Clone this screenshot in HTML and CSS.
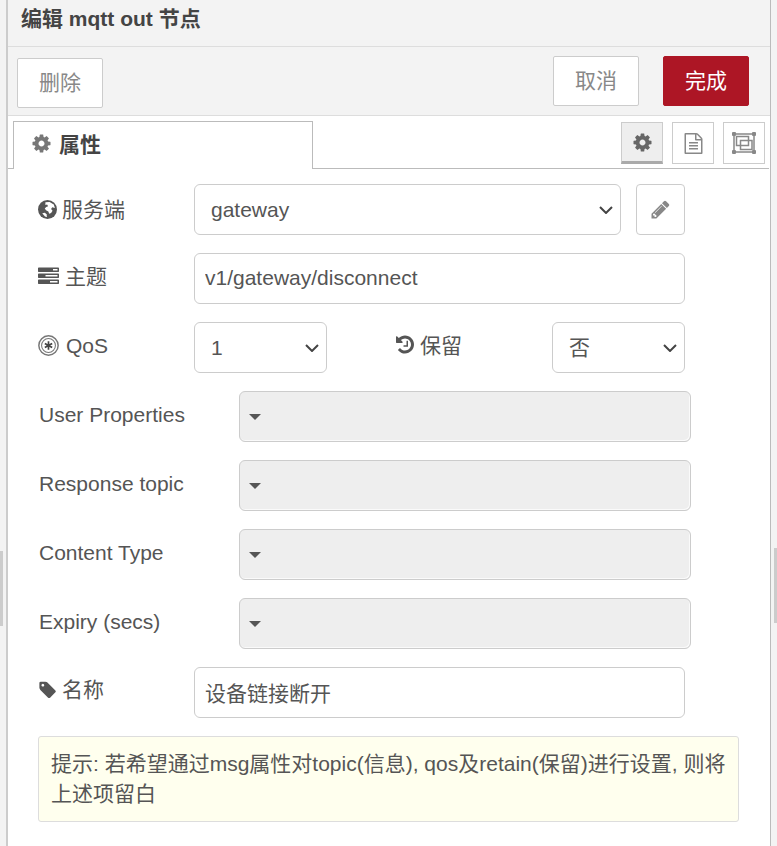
FILE: index.html
```html
<!DOCTYPE html>
<html lang="zh-CN">
<head>
    <meta charset="UTF-8">
    <meta name="viewport" content="width=device-width, initial-scale=1.0">
    <title>编辑 mqtt out 节点</title>
    <link rel="stylesheet" href="styles.css">
</head>
<body>
    <div class="page">
        <div class="gutter gutter-left"><div class="grip"></div></div>
        <div class="tray">
            <div class="tray-title">编辑 mqtt out 节点</div>

            <div class="toolbar">
                <button class="btn btn-delete">删除</button>
                <div class="toolbar-right">
                    <button class="btn">取消</button>
                    <button class="btn btn-primary">完成</button>
                </div>
            </div>

            <div class="tabs">
                <div class="tab">
                    <svg class="icon icon-tab" viewBox="0 0 1792 1792"><path d="M1152 896q0-106-75-181t-181-75-181 75-75 181 75 181 181 75 181-75 75-181zm512-109v222q0 12-8 23t-20 13l-185 28q-19 54-39 91 35 50 107 138 10 12 10 25t-9 23q-27 37-99 108t-94 71q-12 0-26-9l-138-108q-44 23-91 38-16 136-29 186-7 28-36 28h-222q-14 0-24.5-8.5t-11.5-21.5l-28-184q-49-16-90-37l-141 107q-10 9-25 9-14 0-25-11-126-114-165-168-7-10-7-23 0-12 8-23 15-21 51-66.5t54-70.5q-27-50-41-99l-183-27q-13-2-21-12.5t-8-23.5v-222q0-12 8-23t19-13l186-28q14-46 39-92-40-57-107-138-10-12-10-24 0-10 9-23 26-36 98.5-107.5t94.5-71.5q13 0 26 10l138 107q44-23 91-38 16-136 29-186 7-28 36-28h222q14 0 24.5 8.5t11.5 21.5l28 184q49 16 90 37l142-107q9-9 24-9 13 0 25 10 129 119 165 170 7 8 7 22 0 12-8 23-15 21-51 66.5t-54 70.5q26 50 41 98l183 28q13 2 21 12.5t8 23.5z"/></svg>
                    <span>属性</span>
                </div>
                <div class="tab-buttons">
                    <div class="tab-btn tab-btn-active">
                        <svg class="icon icon-gear" viewBox="0 0 1792 1792"><path d="M1152 896q0-106-75-181t-181-75-181 75-75 181 75 181 181 75 181-75 75-181zm512-109v222q0 12-8 23t-20 13l-185 28q-19 54-39 91 35 50 107 138 10 12 10 25t-9 23q-27 37-99 108t-94 71q-12 0-26-9l-138-108q-44 23-91 38-16 136-29 186-7 28-36 28h-222q-14 0-24.5-8.5t-11.5-21.5l-28-184q-49-16-90-37l-141 107q-10 9-25 9-14 0-25-11-126-114-165-168-7-10-7-23 0-12 8-23 15-21 51-66.5t54-70.5q-27-50-41-99l-183-27q-13-2-21-12.5t-8-23.5v-222q0-12 8-23t19-13l186-28q14-46 39-92-40-57-107-138-10-12-10-24 0-10 9-23 26-36 98.5-107.5t94.5-71.5q13 0 26 10l138 107q44-23 91-38 16-136 29-186 7-28 36-28h222q14 0 24.5 8.5t11.5 21.5l28 184q49 16 90 37l142-107q9-9 24-9 13 0 25 10 129 119 165 170 7 8 7 22 0 12-8 23-15 21-51 66.5t-54 70.5q26 50 41 98l183 28q13 2 21 12.5t8 23.5z"/></svg>
                    </div>
                    <div class="tab-btn">
                        <svg class="icon icon-muted" viewBox="0 0 1792 1792"><path d="M1596 380q28 28 48 76t20 88v1152q0 40-28 68t-68 28h-1344q-40 0-68-28t-28-68v-1600q0-40 28-68t68-28h896q40 0 88 20t76 48zm-444-244v376h376q-10-29-22-41l-313-313q-12-12-41-22zm384 1528v-1024h-416q-40 0-68-28t-28-68v-416h-768v1536h1280zm-1024-864q0-14 9-23t23-9h704q14 0 23 9t9 23v64q0 14-9 23t-23 9h-704q-14 0-23-9t-9-23v-64zm736 224q14 0 23 9t9 23v64q0 14-9 23t-23 9h-704q-14 0-23-9t-9-23v-64q0-14 9-23t23-9h704zm0 256q14 0 23 9t9 23v64q0 14-9 23t-23 9h-704q-14 0-23-9t-9-23v-64q0-14 9-23t23-9h704z"/></svg>
                    </div>
                    <div class="tab-btn">
                        <svg class="icon-frame" viewBox="0 0 24 22">
                            <rect x="2" y="2" width="20" height="18" fill="none" stroke="#888" stroke-width="1.5"/>
                            <rect x="4.5" y="4.5" width="12" height="9" fill="none" stroke="#888" stroke-width="1.5"/>
                            <rect x="8.5" y="8.5" width="11.5" height="9" fill="none" stroke="#888" stroke-width="1.5"/>
                            <rect x="0" y="0" width="4" height="4" rx="1" fill="#888"/>
                            <rect x="20" y="0" width="4" height="4" rx="1" fill="#888"/>
                            <rect x="0" y="18" width="4" height="4" rx="1" fill="#888"/>
                            <rect x="20" y="18" width="4" height="4" rx="1" fill="#888"/>
                        </svg>
                    </div>
                </div>
            </div>

            <div class="form">
                <div class="form-row">
                    <label class="form-label">
                        <svg class="icon-label icon-globe" viewBox="0 0 18 18">
                            <circle cx="9" cy="9" r="9" fill="#555"/>
                            <path d="M7 2.2 11 1.8 15 4.2 16 7.5 13.5 6.8 12.4 8.6 13.8 10.2 12.4 12.4 10.6 13 9.8 10.8 7.6 9.8 6.4 8 7.8 6.6 9.6 6 8.6 4.2 7 4.8z" fill="#fff"/>
                            <path d="M4 12.6 6.6 12 8 13.6 8.6 16.2 6.6 15.6z" fill="#fff"/>
                        </svg>
                        <span>服务端</span>
                    </label>
                    <select class="select select-wide"><option>gateway</option></select>
                    <button class="edit-btn">
                        <svg class="icon icon-muted" viewBox="0 0 1792 1792"><path d="M491 1536l91-91-235-235-91 91v107h128v128h107zm523-928q0-22-22-22-10 0-17 7l-542 542q-7 7-7 17 0 22 22 22 10 0 17-7l542-542q7-7 7-17zm-54-192l416 416-832 832h-416v-416zm683 96q0 53-37 90l-166 166-416-416 166-165q36-38 90-38 53 0 91 38l235 234q37 39 37 91z"/></svg>
                    </button>
                </div>

                <div class="form-row">
                    <label class="form-label label-up">
                        <svg class="icon icon-label icon-tasks" viewBox="0 0 1792 1792"><path d="M1024 1408h640v-128h-640v128zm-384-512h1024v-128h-1024v128zm640-512h384v-128h-384v128zm512 832v256q0 26-19 45t-45 19h-1664q-26 0-45-19t-19-45v-256q0-26 19-45t45-19h1664q26 0 45 19t19 45zm0-512v256q0 26-19 45t-45 19h-1664q-26 0-45-19t-19-45v-256q0-26 19-45t45-19h1664q26 0 45 19t19 45zm0-512v256q0 26-19 45t-45 19h-1664q-26 0-45-19t-19-45v-256q0-26 19-45t45-19h1664q26 0 45 19t19 45z"/></svg>
                        <span>主题</span>
                    </label>
                    <input class="input" type="text" value="v1/gateway/disconnect">
                </div>

                <div class="form-row">
                    <label class="form-label">
                        <svg class="icon-label icon-empire" viewBox="0 0 20 20">
                            <circle cx="10" cy="10" r="9.2" fill="none" stroke="#777" stroke-width="1.4"/>
                            <circle cx="10" cy="10" r="6.6" fill="none" stroke="#777" stroke-width="1"/>
                            <path d="M10 6v8M6.5 8 13.5 12M13.5 8 6.5 12" stroke="#444" stroke-width="1.6"/>
                        </svg>
                        <span>QoS</span>
                    </label>
                    <select class="select select-small"><option>1</option></select>
                    <label class="form-label form-label-retain label-up">
                        <svg class="icon icon-label icon-history" viewBox="128 0 1536 1792"><path d="M1664 896q0 156-61 298t-164 245-245 164-298 61q-172 0-327-72.5t-264-204.5q-7-10-6.5-22.5t8.5-20.5l137-138q10-9 25-9 16 2 23 12 73 95 179 147t225 52q104 0 198.5-40.5t163.5-109.5 109.5-163.5 40.5-198.5-40.5-198.5-109.5-163.5-163.5-109.5-198.5-40.5q-98 0-188 35.5t-160 101.5l137 138q31 30 14 69-17 40-59 40h-448q-26 0-45-19t-19-45v-448q0-42 40-59 39-17 69 14l130 129q107-101 244.5-156.5t284.5-55.5q156 0 298 61t245 164 164 245 61 298zm-512-288v448q0 14-9 23t-23 9h-320q-14 0-23-9t-9-23v-64q0-14 9-23t23-9h224v-352q0-14 9-23t23-9h64q14 0 23 9t9 23z"/></svg>
                        <span>保留</span>
                    </label>
                    <select class="select select-small"><option>否</option></select>
                </div>

                <div class="form-row">
                    <label class="form-label form-label-long">User Properties</label>
                    <div class="typed-input"><span class="caret"></span></div>
                </div>
                <div class="form-row">
                    <label class="form-label form-label-long">Response topic</label>
                    <div class="typed-input"><span class="caret"></span></div>
                </div>
                <div class="form-row">
                    <label class="form-label form-label-long">Content Type</label>
                    <div class="typed-input"><span class="caret"></span></div>
                </div>
                <div class="form-row">
                    <label class="form-label form-label-long">Expiry (secs)</label>
                    <div class="typed-input"><span class="caret"></span></div>
                </div>

                <div class="form-row">
                    <label class="form-label label-name">
                        <svg class="icon-label icon-tag" viewBox="0 0 1664 1792"><path d="M576 448q0-53-37.5-90.5t-90.5-37.5-90.5 37.5-37.5 90.5 37.5 90.5 90.5 37.5 90.5-37.5 37.5-90.5zm1067 576q0 53-37 90l-491 492q-39 37-91 37-53 0-90-37l-715-716q-38-37-64.5-101t-26.5-117v-416q0-52 38-90t90-38h416q53 0 117 26.5t102 64.5l715 714q37 39 37 91z"/></svg>
                        <span>名称</span>
                    </label>
                    <input class="input" type="text" value="设备链接断开">
                </div>

                <div class="form-tips">提示: 若希望通过msg属性对topic(信息), qos及retain(保留)进行设置, 则将上述项留白</div>
            </div>
        </div>
        <div class="gutter gutter-right"><div class="grip"></div></div>
    </div>
</body>
</html>
```

FILE: styles.css
```css
* {
    box-sizing: border-box;
}
body {
    margin: 0;
    overflow: hidden;
    font-family: "Liberation Sans", "Noto Sans CJK SC", sans-serif;
    font-size: 21px;
    color: #555;
    background-color: #fff;
}
.page {
    display: flex;
    height: 846px;
}
.gutter {
    width: 6px;
    flex: none;
    background-color: #f3f3f3;
}
.grip {
    width: 3px;
    height: 75px;
    margin-top: 551px;
    background-color: #ccc;
}
.gutter-right {
    padding-left: 3px;
}
.gutter-right .grip {
    margin-top: 548px;
}
.tray {
    flex: 1;
    min-width: 0;
    border-left: 2px solid #ccc;
    border-right: 1px solid #bbb;
    background-color: #fff;
}
.tray-title {
    height: 47px;
    padding: 5px 0 0 13px;
    font-weight: bold;
    line-height: 28px;
    color: #444;
    background-color: #f3f3f3;
    border-bottom: 1px solid #ddd;
}
.toolbar {
    display: flex;
    justify-content: space-between;
    align-items: flex-start;
    height: 69px;
    padding: 9px 21px 0 9px;
    background-color: #f3f3f3;
    border-bottom: 1px solid #ddd;
}
.toolbar-right {
    display: flex;
    gap: 24px;
}
.btn {
    width: 86px;
    height: 50px;
    padding: 0 0 5px;
    font-family: inherit;
    font-size: 21px;
    color: #888;
    background-color: #fff;
    border: 1px solid #ccc;
    border-radius: 2px;
}
.btn-delete {
    margin-top: 2px;
}
.btn-primary {
    color: #fff;
    background-color: #ad1625;
    border-color: #ad1625;
}
.tabs {
    display: flex;
    justify-content: space-between;
    height: 53px;
    margin-right: 1px;
    padding-left: 5px;
    border-bottom: 1px solid #bbb;
}
.tab {
    display: flex;
    align-items: center;
    gap: 7px;
    width: 300px;
    height: 48px;
    margin-top: 5px;
    padding: 0 0 5px 17px;
    font-weight: bold;
    color: #444;
    background-color: #fff;
    border: 1px solid #bbb;
    border-bottom: none;
}
.tab-buttons {
    display: flex;
    gap: 9px;
    margin-top: 6px;
    padding-right: 4px;
}
.tab-btn {
    display: flex;
    align-items: center;
    justify-content: center;
    width: 42px;
    height: 42px;
    border: 1px solid #ccc;
}
.tab-btn-active {
    background-color: #eee;
    border-bottom: 3px solid #aaa;
}
.icon {
    width: 21px;
    height: 21px;
    flex: none;
    fill: #555;
}
.icon-tab {
    fill: #777;
}
.icon-gear {
    fill: #666;
}
.icon-muted {
    fill: #888;
}
.icon-frame {
    width: 24px;
    height: 22px;
}
.form {
    padding: 15px 0 0 30px;
}
.form-row {
    display: flex;
    align-items: center;
    height: 51px;
    margin-bottom: 18px;
}
.form-label {
    display: flex;
    align-items: center;
    gap: 6px;
    width: 156px;
    flex: none;
    margin-top: -4px;
    white-space: nowrap;
}
.label-up {
    margin-top: -7px;
}
.label-name {
    margin-top: -9px;
}
.form-label-long {
    width: 201px;
    padding-left: 1px;
}
.form-label-retain {
    margin-left: 69px;
}
.icon-label {
    flex: none;
}
.icon-globe {
    width: 19px;
    height: 19px;
    margin: 3px -1px 0 0;
}
.icon-tasks {
    margin-top: 3px;
}
.icon-empire {
    width: 21px;
    height: 21px;
    margin-right: 1px;
}
.icon-history {
    width: 18px;
}
.icon-tag {
    width: 18px;
    height: 20px;
    margin-top: 3px;
    fill: #555;
}
.select {
    height: 51px;
    padding-left: 16px;
    font-family: inherit;
    font-size: 21px;
    color: #555;
    appearance: none;
    background: #fff url("data:image/svg+xml,%3Csvg xmlns='http://www.w3.org/2000/svg' width='14' height='8'%3E%3Cpath d='M1 1l6 6 6-6' fill='none' stroke='%23444' stroke-width='2'/%3E%3C/svg%3E") no-repeat right 7px center;
    border: 1px solid #ccc;
    border-radius: 6px;
}
.select-wide {
    width: 427px;
}
.select-small {
    width: 133px;
}
.edit-btn {
    display: flex;
    align-items: center;
    justify-content: center;
    width: 49px;
    height: 51px;
    margin-left: 15px;
    padding: 0;
    background-color: #fff;
    border: 1px solid #ccc;
    border-radius: 4px;
}
.input {
    width: 491px;
    height: 51px;
    padding: 0 10px 2px;
    font-family: inherit;
    font-size: 21px;
    color: #555;
    background-color: #fff;
    border: 1px solid #ccc;
    border-radius: 6px;
}
.typed-input {
    display: flex;
    align-items: center;
    width: 452px;
    height: 51px;
    padding-left: 9px;
    background-color: #eee;
    border: 1px solid #ccc;
    border-radius: 6px;
    box-shadow: inset -1px -1px 0 #fafafa;
}
.caret {
    width: 0;
    height: 0;
    border-left: 6.5px solid transparent;
    border-right: 6.5px solid transparent;
    border-top: 6px solid #555;
}
.form-tips {
    width: 701px;
    padding: 12px;
    line-height: 30px;
    background-color: #ffe;
    border: 1px solid #ddd;
    border-radius: 3px;
}
```
